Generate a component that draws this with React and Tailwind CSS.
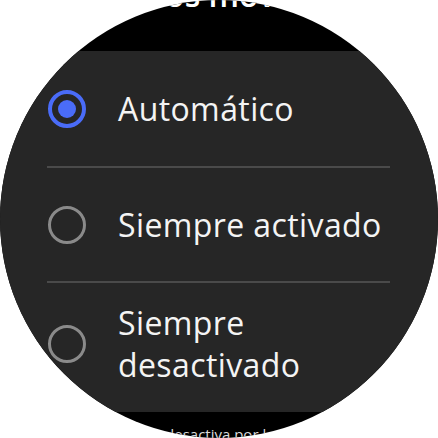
import React from "react";

function Radio({ checked }) {
  if (checked) {
    return (
      <div className="w-[38px] h-[38px] shrink-0 rounded-full border-[4px] border-[#4a6cf8] flex items-center justify-center">
        <div className="w-[18px] h-[18px] rounded-full bg-[#4a6cf8]" />
      </div>
    );
  }
  return <div className="w-[38px] h-[38px] shrink-0 rounded-full border-[3px] border-[#8a8a8a]" />;
}

function Row({ checked, children, className }) {
  return (
    <div className={`flex items-center pl-[48px] pr-[10px] gap-[32px] ${className}`}>
      <Radio checked={checked} />
      <div className="text-[32px] leading-[42px] tracking-[0.4px] text-[#f4f4f4] whitespace-nowrap">{children}</div>
    </div>
  );
}

export default function App() {
  return (
    <div className="w-[438px] h-[438px] bg-white" style={{ fontFamily: '"Open Sans", "Noto Sans", sans-serif' }}>
      <div className="w-[438px] h-[438px] rounded-full bg-black overflow-hidden flex flex-col">
        <div className="h-[51px] shrink-0 overflow-hidden">
          <div className="-mt-[25px] text-center text-[32px] leading-[40px] font-semibold text-white">
            Datos móviles
          </div>
        </div>
        <div className="bg-[#262626] shrink-0 flex flex-col pb-[7px]">
          <Row checked className="h-[115px]">Automático</Row>
          <div className="ml-[47px] w-[343px] h-[2px] bg-[#4a4a4a]" />
          <Row className="h-[113px]">Siempre activado</Row>
          <div className="ml-[47px] w-[343px] h-[2px] bg-[#4a4a4a]" />
          <Row className="h-[122px]">
            Siempre
            <br />
            desactivado
          </Row>
        </div>
        <div className="mt-[13px] pl-[28px] text-center text-[15px] leading-[18px] text-[#dcdcdc] whitespace-nowrap">
          Se desactiva por la noche
        </div>
      </div>
    </div>
  );
}
